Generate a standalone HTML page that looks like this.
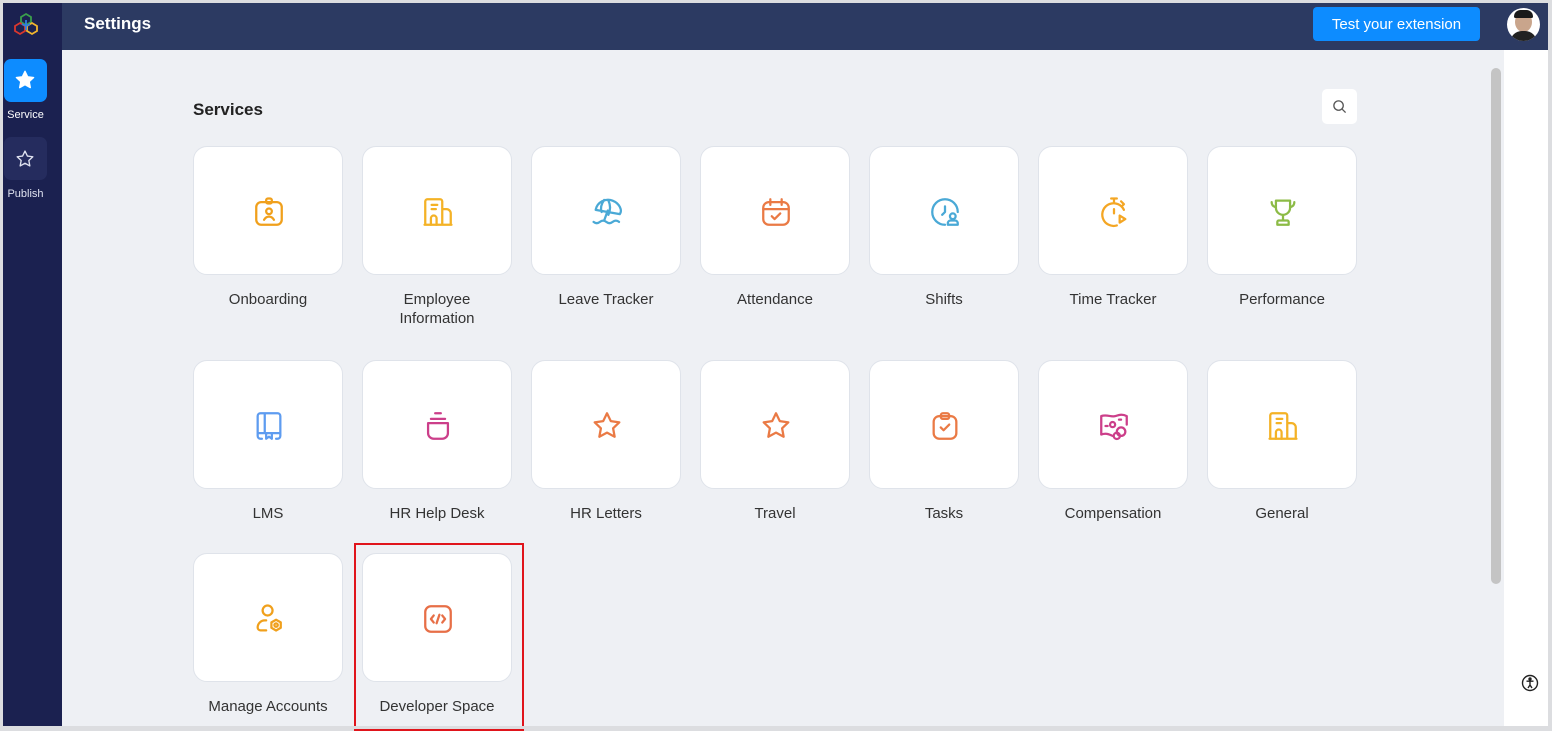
<!DOCTYPE html>
<html><head><meta charset="utf-8"><style>
*{margin:0;padding:0;box-sizing:border-box}
body{width:1552px;height:729px;background:#dcdde0;font-family:"Liberation Sans",sans-serif;position:relative;overflow:hidden}
.side{position:absolute;left:3px;top:3px;width:59px;height:723px;background:#1b2150}
.hdr{position:absolute;left:62px;top:3px;width:1486px;height:47px;background:#2c3a62}
.main{position:absolute;left:62px;top:50px;width:1442px;height:676px;background:#eef0f4}
.rp{position:absolute;left:1504px;top:50px;width:44px;height:676px;background:#fff}
.sb{position:absolute;left:1491px;top:68px;width:10px;height:516px;background:#c4c4c4;border-radius:5px}
.card{position:absolute;width:150px;height:129px;background:#fff;border:1px solid #dfe3ea;border-radius:14px}
.card svg{position:absolute;left:58px;top:48px}
.lbl{position:absolute;width:170px;text-align:center;font-size:15px;color:#333;line-height:19px}
</style></head><body>
<div class="side">
<svg style="position:absolute;left:10px;top:9px" width="26" height="26" viewBox="0 0 26 26" fill="none" stroke-width="1.8"><path d="M13 2l5 3v5l-5 3-5-3V5z" stroke="#3a9f4c"/><path d="M7 11l5 3v5l-5 3-5-3v-5z" stroke="#d9372e"/><path d="M19 11l5 3v5l-5 3-5-3v-5z" stroke="#f1b52e"/><path d="M13 8v10M9 12l4 2 4-2" stroke="#2f7fe0"/></svg>
<div style="position:absolute;left:1px;top:56px;width:43px;height:43px;background:#0d8cff;border-radius:7px"></div>
<svg style="position:absolute;left:11px;top:66px" width="22" height="22" viewBox="0 0 24 24"><path d="M12 2.5l2.9 6 6.5.8-4.8 4.5 1.2 6.5L12 17.1l-5.8 3.2 1.2-6.5L2.6 9.3l6.5-.8z" fill="#fff" stroke="#fff" stroke-width="1.5" stroke-linejoin="round"/></svg>
<div style="position:absolute;left:0;top:106px;width:45px;text-align:center;color:#fff;font-size:11px">Service</div>
<div style="position:absolute;left:1px;top:134px;width:43px;height:43px;background:#252c5e;border-radius:7px"></div>
<svg style="position:absolute;left:12px;top:146px" width="20" height="20" viewBox="0 0 24 24"><path d="M12 2.5l2.9 6 6.5.8-4.8 4.5 1.2 6.5L12 17.1l-5.8 3.2 1.2-6.5L2.6 9.3l6.5-.8z" fill="none" stroke="#dfe2f0" stroke-width="1.6" stroke-linejoin="round"/></svg>
<div style="position:absolute;left:0;top:185px;width:45px;text-align:center;color:#dfe2f0;font-size:11px">Publish</div>
</div>
<div class="hdr">
<div style="position:absolute;left:22px;top:11px;color:#fff;font-size:17px;font-weight:bold">Settings</div>
<div style="position:absolute;left:1251px;top:4px;width:167px;height:34px;background:#0d8cff;border-radius:4px;color:#fff;font-size:15px;text-align:center;line-height:36px">Test your extension</div>
<div style="position:absolute;left:1445px;top:5px;width:33px;height:33px;border-radius:50%;background:#fff;overflow:hidden"><div style="position:absolute;left:8px;top:4px;width:17px;height:20px;border-radius:50%;background:#c9a58c"></div><div style="position:absolute;left:7px;top:2px;width:19px;height:8px;border-radius:9px 9px 2px 2px;background:#1a1a1a"></div><div style="position:absolute;left:3px;top:23px;width:27px;height:14px;border-radius:12px 12px 0 0;background:#222"></div></div>
</div>
<div class="main"></div>
<div class="rp"></div>
<div class="sb"></div>
<div style="position:absolute;left:193px;top:100px;font-size:17px;font-weight:bold;color:#222">Services</div>
<div style="position:absolute;left:1322px;top:89px;width:35px;height:35px;background:#fff;border-radius:5px"><svg style="position:absolute;left:10px;top:10px" width="15" height="15" viewBox="0 0 16 16" fill="none" stroke="#555" stroke-width="1.4"><circle cx="7" cy="7" r="5"/><path d="M11 11l3.5 3.5"/></svg></div>
<svg style="position:absolute;left:1521px;top:674px" width="18" height="18" viewBox="0 0 18 18" fill="none" stroke="#222" stroke-width="1.4"><circle cx="9" cy="9" r="7.5"/><circle cx="9" cy="5" r="1" fill="#222"/><path d="M5.5 7.2h7M9 7.2v4M9 11l-2 3M9 11l2 3"/></svg>

<div class="card" style="left:193px;top:146px"><svg width="34" height="34" viewBox="0 0 24 24" fill="none" stroke="#f0a01c" stroke-width="1.6" stroke-linecap="round"><rect x="3" y="5" width="18" height="16" rx="3.5"/><rect x="10" y="2.5" width="4" height="3.5" rx="1.2"/><circle cx="12" cy="11.5" r="2"/><path d="M8.5 17.5c1-1.6 2.2-2.2 3.5-2.2s2.5.6 3.5 2.2"/></svg></div>
<div class="card" style="left:362px;top:146px"><svg width="34" height="34" viewBox="0 0 24 24" fill="none" stroke="#f4b226" stroke-width="1.6" stroke-linecap="round" stroke-linejoin="round"><path d="M3 21V4.5A1.5 1.5 0 0 1 4.5 3h9A1.5 1.5 0 0 1 15 4.5V21M15 10h3a3 3 0 0 1 3 3v8M2.5 21h19M7.5 7h4M7.5 10h3"/><path d="M7 21v-4.5a2 2 0 0 1 4 0V21"/></svg></div>
<div class="card" style="left:531px;top:146px"><svg width="34" height="34" viewBox="0 0 24 24" fill="none" stroke="#4aa9d6" stroke-width="1.6" stroke-linecap="round" stroke-linejoin="round"><path d="M4 10.5C5 5 11 2 16 4s7 7 5 9.5zM10 3.5C7.5 7 7.5 10 8.2 12M13 4c1.5 3 1.5 6.5 0 10M12.5 11l-2.5 7"/><path d="M2.5 19c1.5 1.2 3 1.2 4.5 0s3-1.2 4.5 0 3 1.2 4.5 0 3-1.2 4.5 0"/></svg></div>
<div class="card" style="left:700px;top:146px"><svg width="34" height="34" viewBox="0 0 24 24" fill="none" stroke="#ea7a45" stroke-width="1.6" stroke-linecap="round" stroke-linejoin="round"><rect x="3" y="5" width="18" height="16" rx="4"/><path d="M3 10h18M8 3v4M16 3v4M9 15l2 2 4-4"/></svg></div>
<div class="card" style="left:869px;top:146px"><svg width="34" height="34" viewBox="0 0 24 24" fill="none" stroke="#4aa9d6" stroke-width="1.6" stroke-linecap="round" stroke-linejoin="round"><path d="M12 21a9 9 0 1 1 9-9M12 8v4l-2 2"/><circle cx="17.5" cy="15" r="2"/><path d="M14 21v-1a2 2 0 0 1 2-2h3a2 2 0 0 1 2 2v1z"/></svg></div>
<div class="card" style="left:1038px;top:146px"><svg width="34" height="34" viewBox="0 0 24 24" fill="none" stroke="#f4a624" stroke-width="1.6" stroke-linecap="round" stroke-linejoin="round"><path d="M14 21.5a8 8 0 1 1 5-11M10 2.5h4M12 2.5v3M12 10v3M17 4.5l2 2-1 1M16 14.5v5l4-2.5z"/></svg></div>
<div class="card" style="left:1207px;top:146px"><svg width="34" height="34" viewBox="0 0 24 24" fill="none" stroke="#8cbb46" stroke-width="1.6" stroke-linecap="round" stroke-linejoin="round"><path d="M7 4h10v5a5 5 0 0 1-10 0zM12 14v4M8 21h8v-2a1 1 0 0 0-1-1H9a1 1 0 0 0-1 1zM4 5c0 2 1 3 2.5 3.5M20 5c0 2-1 3-2.5 3.5"/></svg></div>
<div class="lbl" style="left:183px;top:290px">Onboarding</div>
<div class="lbl" style="left:352px;top:290px">Employee<br>Information</div>
<div class="lbl" style="left:521px;top:290px">Leave Tracker</div>
<div class="lbl" style="left:690px;top:290px">Attendance</div>
<div class="lbl" style="left:859px;top:290px">Shifts</div>
<div class="lbl" style="left:1028px;top:290px">Time Tracker</div>
<div class="lbl" style="left:1197px;top:290px">Performance</div>

<div class="card" style="left:193px;top:360px"><svg width="34" height="34" viewBox="0 0 24 24" fill="none" stroke="#5e9cf0" stroke-width="1.6" stroke-linecap="round" stroke-linejoin="round"><path d="M4 19V5a2 2 0 0 1 2-2h12a2 2 0 0 1 2 2v14a2 2 0 0 1-2 2h-1M9 3v14M4 17h16M7 21H6a2 2 0 0 1-2-2M10 17v4l2-1.5 2 1.5v-4"/></svg></div>
<div class="card" style="left:362px;top:360px"><svg width="34" height="34" viewBox="0 0 24 24" fill="none" stroke="#cc3f8a" stroke-width="1.6" stroke-linecap="round" stroke-linejoin="round"><path d="M10 3h4M7 7h10M5 10h14v7a4 4 0 0 1-4 4H9a4 4 0 0 1-4-4z"/></svg></div>
<div class="card" style="left:531px;top:360px"><svg width="34" height="34" viewBox="0 0 24 24" fill="none" stroke="#ea7a45" stroke-width="1.6" stroke-linejoin="round"><path d="M12 3l2.7 5.6 6 .8-4.4 4.2 1.1 6L12 16.7l-5.4 2.9 1.1-6L3.3 9.4l6-.8z"/></svg></div>
<div class="card" style="left:700px;top:360px"><svg width="34" height="34" viewBox="0 0 24 24" fill="none" stroke="#ea7a45" stroke-width="1.6" stroke-linejoin="round"><path d="M12 3l2.7 5.6 6 .8-4.4 4.2 1.1 6L12 16.7l-5.4 2.9 1.1-6L3.3 9.4l6-.8z"/></svg></div>
<div class="card" style="left:869px;top:360px"><svg width="34" height="34" viewBox="0 0 24 24" fill="none" stroke="#ea7a45" stroke-width="1.6" stroke-linecap="round" stroke-linejoin="round"><rect x="4" y="5" width="16" height="16" rx="4"/><rect x="9" y="3" width="6" height="4" rx="1.5"/><path d="M9 13l2 2 4-4"/></svg></div>
<div class="card" style="left:1038px;top:360px"><svg width="34" height="34" viewBox="0 0 24 24" fill="none" stroke="#cc3f8a" stroke-width="1.6" stroke-linecap="round" stroke-linejoin="round"><path d="M11 19c-3-1.5-5-2-8-1V5c4-1.5 7 1 10 0s5-1.5 8 0v6"/><circle cx="11" cy="11" r="1.8"/><path d="M6 12h1.5M15.5 7.5H17"/><circle cx="17" cy="16" r="3"/><circle cx="14" cy="19" r="2.2"/></svg></div>
<div class="card" style="left:1207px;top:360px"><svg width="34" height="34" viewBox="0 0 24 24" fill="none" stroke="#f4b226" stroke-width="1.6" stroke-linecap="round" stroke-linejoin="round"><path d="M3 21V4.5A1.5 1.5 0 0 1 4.5 3h9A1.5 1.5 0 0 1 15 4.5V21M15 10h3a3 3 0 0 1 3 3v8M2.5 21h19M7.5 7h4M7.5 10h3"/><path d="M7 21v-4.5a2 2 0 0 1 4 0V21"/></svg></div>
<div class="lbl" style="left:183px;top:504px">LMS</div>
<div class="lbl" style="left:352px;top:504px">HR Help Desk</div>
<div class="lbl" style="left:521px;top:504px">HR Letters</div>
<div class="lbl" style="left:690px;top:504px">Travel</div>
<div class="lbl" style="left:859px;top:504px">Tasks</div>
<div class="lbl" style="left:1028px;top:504px">Compensation</div>
<div class="lbl" style="left:1197px;top:504px">General</div>

<div class="card" style="left:193px;top:553px"><svg width="34" height="34" viewBox="0 0 24 24" fill="none" stroke="#f0a01c" stroke-width="1.6" stroke-linecap="round" stroke-linejoin="round"><circle cx="11" cy="6" r="3.5"/><path d="M10 20H6a2 2 0 0 1-2-2 5 5 0 0 1 5-5h1"/><path d="M17 12.5l3.3 1.9v3.8L17 20.1l-3.3-1.9v-3.8z"/><circle cx="17" cy="16.3" r="1.2"/></svg></div>
<div class="card" style="left:362px;top:553px"><svg width="34" height="34" viewBox="0 0 24 24" fill="none" stroke="#e76f47" stroke-width="1.6" stroke-linecap="round" stroke-linejoin="round"><rect x="3" y="3" width="18" height="18" rx="4"/><path d="M9 9.5L7 12l2 2.5M15 9.5l2 2.5-2 2.5M13 9l-2 6"/></svg></div>
<div class="lbl" style="left:183px;top:697px">Manage Accounts</div>
<div class="lbl" style="left:352px;top:697px">Developer Space</div>
<div style="position:absolute;left:354px;top:543px;width:170px;height:188px;border:2px solid #e0141b"></div>
<div style="position:absolute;left:0;top:726px;width:1552px;height:3px;background:#dcdde0"></div>
</body></html>
